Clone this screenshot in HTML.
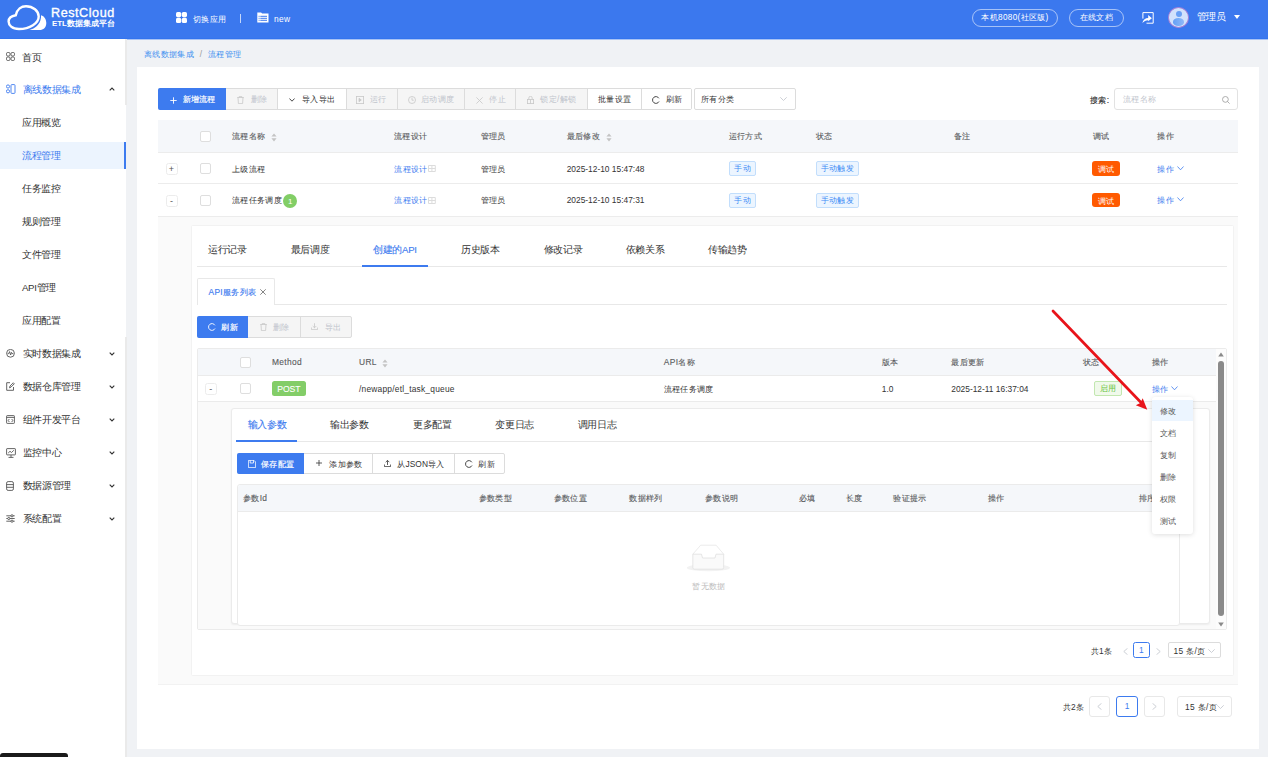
<!DOCTYPE html>
<html><head><meta charset="utf-8">
<style>
*{box-sizing:border-box;margin:0;padding:0}
html,body{width:1268px;height:757px;overflow:hidden;background:#f0f2f5;font-family:"Liberation Sans",sans-serif;color:#333;letter-spacing:.33px}
.ln{letter-spacing:0}
.a{position:absolute}
.t{position:absolute;white-space:nowrap;line-height:14px;height:14px}
.s12{font-size:8.4px}
.s14{font-size:9.6px;letter-spacing:-.3px}
#hdr{left:0;top:0;width:1268px;height:39px;background:#3b78ee;border-bottom:1px solid #3374ee;box-shadow:0 1px 0 #a9c3f5}
#side{left:0;top:39px;width:125px;height:718px;background:#fff}
.btn{position:absolute;height:21px;border:1px solid #dcdcdc;background:#fff;font-size:8.4px;color:#333;line-height:19px;text-align:center;white-space:nowrap}
.btn.p{background:#3d7bef;border-color:#3d7bef;color:#fff}
.btn.d{background:#f5f5f5;color:#c0c4cc;border-color:#e8e8e8}
.hline{position:absolute;height:1px;background:#ececec}
.cb{position:absolute;width:11px;height:11px;border:1px solid #dedede;border-radius:2px;background:#fff}
.exp{position:absolute;width:12px;height:12px;border:1px solid #ececec;border-radius:2.5px;background:#fff;font-size:9px;line-height:10.5px;text-align:center;color:#555}
.tag{position:absolute;height:15px;border:1px solid #c2defc;background:#ecf5ff;color:#3f8cf5;font-size:7.8px;line-height:14px;text-align:center;border-radius:2px;white-space:nowrap}
.th{position:absolute;font-size:8.4px;color:#5a5c60;-webkit-text-stroke:.12px #5a5c60;line-height:14px;height:14px;white-space:nowrap}
.td{position:absolute;font-size:8.4px;color:#333;line-height:14px;height:14px;white-space:nowrap}
.lnk{color:#3d7bef}
.mi{position:absolute;left:22px;font-size:9.6px;letter-spacing:-.3px;color:#333;line-height:14px;height:14px;white-space:nowrap}
</style></head><body>
<!-- HEADER -->
<div id="hdr" class="a">
  <svg class="a" style="left:0;top:0" width="50" height="36" viewBox="0 0 50 36">
    <path d="M15.8,15.2 C17,9 21.5,6.2 26,6.2 C33,6.2 38.7,11 38.7,16.5 C38.7,23 30,29 19,29 C12,29 8.6,25 8.6,21.5 C8.6,18 11.5,15.8 15.8,15.2 Z" fill="none" stroke="#fff" stroke-width="2.4"/>
    <path d="M29.5,30 C35,28.5 40,25 41,17.5 L41,15.2 C44.5,16 46.3,19.5 46.3,23 C46.3,27.5 43.5,30 39.5,30 Z" fill="#fff"/>
  </svg>
  <div class="t" style="left:51px;top:4.5px;font-size:12.6px;color:#fff;height:16px;line-height:16px;-webkit-text-stroke:0.35px #fff;letter-spacing:0.55px">RestCloud</div>
  <div class="t" style="left:52px;top:18.2px;font-size:7.9px;font-weight:bold;color:#fff;height:11px;line-height:11px;letter-spacing:-0.05px">ETL数据集成平台</div>
  <svg class="a" style="left:176px;top:12px" width="11" height="11" viewBox="0 0 11 11"><rect x="0" y="0" width="5.2" height="5.2" rx="1.6" fill="#fff"/><rect x="5.8" y="0" width="5.2" height="5.2" rx="1.6" fill="#fff"/><rect x="0" y="5.8" width="5.2" height="5.2" rx="1.6" fill="#fff"/><rect x="5.8" y="5.8" width="5.2" height="5.2" rx="1.6" fill="#fff"/></svg>
  <div class="t s12" style="left:193px;top:11.5px;color:#fff">切换应用</div>
  <div class="a" style="left:240px;top:14px;width:1px;height:9px;background:rgba(255,255,255,.7)"></div>
  <svg class="a" style="left:257px;top:12px" width="12" height="11" viewBox="0 0 12 11"><path d="M0.3 0.6 h3.8 l1 1 h6.4 v9 h-11.2z" fill="#fff"/><g fill="#3b78ee"><rect x="1.6" y="3.8" width="1" height="1"/><rect x="3.3" y="3.8" width="6.7" height="1"/><rect x="1.6" y="5.8" width="1" height="1"/><rect x="3.3" y="5.8" width="6.7" height="1"/><rect x="1.6" y="7.8" width="1" height="1"/><rect x="3.3" y="7.8" width="6.7" height="1"/></g></svg>
  <div class="t s12" style="left:274px;top:11.6px;color:#fff">new</div>
  <div class="a" style="left:972px;top:9px;width:86px;height:18px;border:1px solid rgba(255,255,255,.55);border-radius:9px;color:#fff;font-size:8.2px;line-height:16px;text-align:center">本机8080(社区版)</div>
  <div class="a" style="left:1069px;top:9px;width:55px;height:18px;border:1px solid rgba(255,255,255,.55);border-radius:9px;color:#fff;font-size:8.2px;line-height:16px;text-align:center">在线文档</div>
  <svg class="a" style="left:1141.5px;top:11.5px" width="12" height="12" viewBox="0 0 12 12"><path d="M0.9 6.6 V0.6 H11.2 V11.2 H4.5" fill="none" stroke="#fff" stroke-width="1"/><path d="M0.3 11 C1.2 7.6 3.5 6.2 6.2 6.1 V3.1 L9.9 6.2 L6.2 9.3 V8.2 C3.8 8.2 2 9.3 0.3 11 Z" fill="#fff"/></svg>
  <div class="a" style="left:1167.7px;top:7.1px;width:21.3px;height:21px;border-radius:50%;background:#d3e2fc;border:1px solid #a27fd6;overflow:hidden">
    <div class="a" style="left:7px;top:3.4px;width:6px;height:6px;border-radius:50%;background:#6aa0f5"></div>
    <div class="a" style="left:4.6px;top:10.3px;width:11px;height:7.5px;border-radius:50%;background:linear-gradient(90deg,#64a0f6,#8fb8f8)"></div>
  </div>
  <div class="t" style="left:1197px;top:10px;font-size:9.5px;color:#fff;letter-spacing:-.6px">管理员</div>
  <div class="a" style="left:1234px;top:15px;width:0;height:0;border-left:3.2px solid transparent;border-right:3.2px solid transparent;border-top:4px solid #fff"></div>
</div>

<!-- SIDEBAR -->
<div class="a" style="left:125px;top:39px;width:2px;height:66.4px;background:#eaeaea"></div>
<div class="a" style="left:125px;top:105.4px;width:1px;height:231.4px;background:#fff"></div>
<div class="a" style="left:125px;top:336.8px;width:2px;height:421px;background:#eaeaea"></div>
<div id="side" class="a">
  <!-- items: centers 57,89.6,122.9,155.4 ... spacing 33 (relative top = cy-39-7) -->
  <svg class="a" style="left:5.5px;top:12.5px" width="9" height="9" viewBox="0 0 9 9" fill="none" stroke="#555" stroke-width="0.9"><rect x="0.5" y="0.5" width="3.5" height="3.5" rx="1.2"/><rect x="5" y="0.5" width="3.5" height="3.5" rx="1.2"/><rect x="0.5" y="5" width="3.5" height="3.5" rx="1.2"/><rect x="5" y="5" width="3.5" height="3.5" rx="1.2"/></svg>
  <div class="mi" style="top:11.5px">首页</div>
  <svg class="a" style="left:5.5px;top:45px" width="10" height="10" viewBox="0 0 10 10" fill="none" stroke="#3d7bef" stroke-width="0.9"><circle cx="2" cy="2.5" r="1.6"/><circle cx="2" cy="7.3" r="1.6"/><rect x="5" y="0.6" width="4" height="8.8" rx="0.8"/></svg>
  <div class="mi" style="top:44.1px;left:22.5px;color:#3d7bef">离线数据集成</div>
  <svg class="a" style="left:108.5px;top:47.5px" width="6" height="4" viewBox="0 0 6 4"><path d="M0.7 3.4 L3 1 L5.3 3.4" fill="none" stroke="#333" stroke-width="1.1"/></svg>
  <div class="mi" style="top:77.4px">应用概览</div>
  <div class="a" style="left:0;top:102.6px;width:126px;height:27px;background:#ecf4fe"></div>
  <div class="a" style="left:123.8px;top:102.6px;width:2.3px;height:27px;background:#3d7bef"></div>
  <div class="mi" style="top:109.9px;color:#3d7bef">流程管理</div>
  <div class="mi" style="top:142.9px">任务监控</div>
  <div class="mi" style="top:175.9px">规则管理</div>
  <div class="mi" style="top:208.9px">文件管理</div>
  <div class="mi" style="top:241.9px">API管理</div>
  <div class="mi" style="top:274.9px">应用配置</div>
  <!-- top-level collapsed -->
  <svg class="a" style="left:5.5px;top:309.5px" width="9" height="9" viewBox="0 0 9 9" fill="none" stroke="#555" stroke-width="0.9"><circle cx="4.5" cy="4.3" r="3.9"/><path d="M1.6 4.6 H2.8 L3.6 2.6 L4.6 6 L5.5 3.4 L6.1 4.6 H7.4"/></svg>
  <div class="mi" style="top:307.9px;left:22.5px">实时数据集成</div>
  <svg class="a" style="left:108.5px;top:312.5px" width="6" height="4" viewBox="0 0 6 4"><path d="M0.7 0.6 L3 3 L5.3 0.6" fill="none" stroke="#333" stroke-width="1.1"/></svg>
  <svg class="a" style="left:5.5px;top:342.5px" width="9" height="9" viewBox="0 0 9 9" fill="none" stroke="#555" stroke-width="0.9"><path d="M7.5 5 V8.3 H0.7 V0.7 H4"/><path d="M3.5 5.8 L4 4 L7.3 0.8 L8.3 1.8 L5 5.1 Z"/></svg>
  <div class="mi" style="top:340.9px;left:22.5px">数据仓库管理</div>
  <svg class="a" style="left:108.5px;top:345.5px" width="6" height="4" viewBox="0 0 6 4"><path d="M0.7 0.6 L3 3 L5.3 0.6" fill="none" stroke="#333" stroke-width="1.1"/></svg>
  <svg class="a" style="left:5.5px;top:375.5px" width="9" height="9" viewBox="0 0 9 9" fill="none" stroke="#555" stroke-width="0.9"><rect x="0.6" y="0.6" width="7.8" height="7.8" rx="0.6"/><path d="M0.6 2.4 H8.4"/><path d="M3.3 4 L2.2 5.5 L3.3 7 M5.7 4 L6.8 5.5 L5.7 7"/></svg>
  <div class="mi" style="top:373.9px;left:22.5px">组件开发平台</div>
  <svg class="a" style="left:108.5px;top:378.5px" width="6" height="4" viewBox="0 0 6 4"><path d="M0.7 0.6 L3 3 L5.3 0.6" fill="none" stroke="#333" stroke-width="1.1"/></svg>
  <svg class="a" style="left:5.5px;top:408.5px" width="10" height="10" viewBox="0 0 10 10" fill="none" stroke="#555" stroke-width="0.9"><rect x="0.6" y="0.6" width="8.8" height="6.3" rx="0.5"/><path d="M5 7 V9.4 M2.5 9.4 H7.5 M2.2 5 L4 3.3 L5.5 4.5 L7.8 2.3"/></svg>
  <div class="mi" style="top:406.9px;left:22.5px">监控中心</div>
  <svg class="a" style="left:108.5px;top:411.5px" width="6" height="4" viewBox="0 0 6 4"><path d="M0.7 0.6 L3 3 L5.3 0.6" fill="none" stroke="#333" stroke-width="1.1"/></svg>
  <svg class="a" style="left:6px;top:441.5px" width="8" height="10" viewBox="0 0 8 10" fill="none" stroke="#555" stroke-width="0.9"><rect x="0.6" y="0.6" width="6.8" height="8.8" rx="1.5"/><path d="M0.6 3.6 H7.4 M0.6 6.3 H7.4"/></svg>
  <div class="mi" style="top:439.9px;left:22.5px">数据源管理</div>
  <svg class="a" style="left:108.5px;top:444.5px" width="6" height="4" viewBox="0 0 6 4"><path d="M0.7 0.6 L3 3 L5.3 0.6" fill="none" stroke="#333" stroke-width="1.1"/></svg>
  <svg class="a" style="left:5.5px;top:474.5px" width="9" height="9" viewBox="0 0 9 9" fill="none" stroke="#555" stroke-width="0.9"><path d="M0.3 1.8 H8.7 M0.3 4.5 H8.7 M0.3 7.2 H8.7"/><circle cx="6" cy="1.8" r="1.1" fill="#fff"/><circle cx="2.8" cy="4.5" r="1.1" fill="#fff"/><circle cx="6" cy="7.2" r="1.1" fill="#fff"/></svg>
  <div class="mi" style="top:472.9px;left:22.5px">系统配置</div>
  <svg class="a" style="left:108.5px;top:477.5px" width="6" height="4" viewBox="0 0 6 4"><path d="M0.7 0.6 L3 3 L5.3 0.6" fill="none" stroke="#333" stroke-width="1.1"/></svg>
</div>

<!-- BREADCRUMB -->
<div class="t" style="left:144px;top:47px;font-size:8.3px;color:#3d8ff0">离线数据集成 <span style="color:#999;margin:0 3px">/</span> 流程管理</div>

<!-- MAIN CARD -->
<div class="a" style="left:137px;top:67px;width:1122px;height:682px;background:#fff"></div>
<!-- TOOLBAR -->
<div class="a" style="left:157.8px;top:88.4px;width:534.5px;height:21.2px;border:1px solid #dcdcdc;border-radius:2px;background:#fff"></div>
<div class="a" style="left:157.8px;top:88.4px;width:68px;height:21.2px;background:#3d7bef;border-radius:2px 0 0 2px"></div>
<svg class="a" style="left:169.5px;top:96.8px" width="7" height="7" viewBox="0 0 7 7"><path d="M3.5 0.3 V6.7 M0.3 3.5 H6.7" stroke="#fff" stroke-width="0.9"/></svg>
<div class="t s12" style="left:182.5px;top:92px;color:#fff;-webkit-text-stroke:.18px #fff">新增流程</div>
<div class="a" style="left:226px;top:89.4px;width:51.5px;height:19.2px;background:#f5f5f5"></div>
<svg class="a" style="left:237px;top:95.5px" width="7" height="8" viewBox="0 0 7 8" fill="none" stroke="#c8c8c8" stroke-width="0.8"><path d="M0.2 1.5 H6.8 M2.3 1.5 V0.4 H4.7 V1.5 M1 1.5 L1.4 7.6 H5.6 L6 1.5"/></svg>
<div class="t s12" style="left:250.5px;top:92px;color:#c0c4cc">删除</div>
<div class="a" style="left:277.3px;top:89.4px;width:1px;height:19.2px;background:#dcdcdc"></div>
<svg class="a" style="left:289.3px;top:97.5px" width="6" height="4" viewBox="0 0 6 4"><path d="M0.4 0.5 L3 3.2 L5.6 0.5" fill="none" stroke="#333" stroke-width="0.9"/></svg>
<div class="t s12" style="left:302px;top:92px;color:#333">导入导出</div>
<div class="a" style="left:345.5px;top:89.4px;width:1px;height:19.2px;background:#dcdcdc"></div>
<div class="a" style="left:346.5px;top:89.4px;width:322px;height:19.2px;background:#f5f5f5"></div>
<div class="a" style="left:396.5px;top:89.4px;width:1px;height:19.2px;background:#dcdcdc"></div>
<div class="a" style="left:464.3px;top:89.4px;width:1px;height:19.2px;background:#dcdcdc"></div>
<div class="a" style="left:515.3px;top:89.4px;width:1px;height:19.2px;background:#dcdcdc"></div>
<div class="a" style="left:587.3px;top:89.4px;width:1px;height:19.2px;background:#dcdcdc"></div>
<div class="a" style="left:588.3px;top:89.4px;width:103px;height:19.2px;background:#fff"></div>
<div class="a" style="left:641px;top:89.4px;width:1px;height:19.2px;background:#dcdcdc"></div>
<svg class="a" style="left:355.8px;top:96px" width="8" height="8" viewBox="0 0 8 8" fill="none" stroke="#c8c8c8" stroke-width="0.8"><rect x="0.4" y="0.4" width="7.2" height="7.2"/><path d="M3 2.3 L5.3 4 L3 5.7Z" fill="#c8c8c8"/></svg>
<div class="t s12" style="left:369.7px;top:92px;color:#c0c4cc">运行</div>
<svg class="a" style="left:407.7px;top:96px" width="8" height="8" viewBox="0 0 8 8" fill="none" stroke="#c8c8c8" stroke-width="0.8"><circle cx="4" cy="4" r="3.5"/><path d="M4 1.8 V4.2 H5.8"/></svg>
<div class="t s12" style="left:421px;top:92px;color:#c0c4cc">启动调度</div>
<svg class="a" style="left:476.4px;top:96.5px" width="7" height="7" viewBox="0 0 7 7"><path d="M0.4 0.4 L6.6 6.6 M6.6 0.4 L0.4 6.6" stroke="#c8c8c8" stroke-width="0.8"/></svg>
<div class="t s12" style="left:489.2px;top:92px;color:#c0c4cc">停止</div>
<svg class="a" style="left:526.7px;top:95.5px" width="7" height="8" viewBox="0 0 7 8" fill="none" stroke="#c8c8c8" stroke-width="0.8"><path d="M1.8 3.5 V2 A1.7 1.7 0 0 1 5.2 2 V3.5"/><rect x="0.4" y="3.5" width="6.2" height="4.1"/><path d="M3.5 3.5 V7.6"/></svg>
<div class="t s12" style="left:540.4px;top:92px;color:#c0c4cc">锁定/解锁</div>
<div class="t s12" style="left:598px;top:92px;color:#333">批量设置</div>
<svg class="a" style="left:651.8px;top:95.8px" width="8" height="8" viewBox="0 0 8 8" fill="none" stroke="#333" stroke-width="0.9"><path d="M6.9 2.3 A3.4 3.4 0 1 0 7 5.5"/></svg>
<div class="t s12" style="left:666px;top:92px;color:#333">刷新</div>
<div class="a" style="left:694.1px;top:88.4px;width:101.8px;height:21.2px;border:1px solid #dcdcdc;border-radius:2px;background:#fff"></div>
<div class="t s12" style="left:701px;top:92px;color:#333">所有分类</div>
<svg class="a" style="left:780px;top:97px" width="7" height="4" viewBox="0 0 7 4"><path d="M0.3 0.3 L3.5 3.5 L6.7 0.3" fill="none" stroke="#c0c4cc" stroke-width="0.8"/></svg>
<div class="t s12" style="left:1090px;top:92.5px;color:#333;-webkit-text-stroke:.15px #333">搜索:</div>
<div class="a" style="left:1114px;top:88px;width:123.8px;height:21.5px;border:1px solid #e2e2e2;border-radius:3px;background:#fff"></div>
<div class="t s12" style="left:1123px;top:92px;color:#c0c4cc">流程名称</div>
<svg class="a" style="left:1222px;top:95.5px" width="8" height="8" viewBox="0 0 8 8" fill="none" stroke="#999" stroke-width="0.8"><circle cx="3.4" cy="3.4" r="2.9"/><path d="M5.5 5.5 L7.6 7.6"/></svg>

<!-- MAIN TABLE -->
<div class="a" style="left:158px;top:120px;width:1080px;height:32.6px;background:#f5f7fa;border-bottom:1px solid #ececec"></div>
<div class="cb" style="left:200px;top:131px"></div>
<div class="th" style="left:232px;top:128.7px">流程名称</div>
<svg class="a" style="left:270.5px;top:132.5px" width="6" height="9" viewBox="0 0 6 9"><path d="M3 0.6 L5.6 3.4 H0.4Z M3 8.4 L5.6 5.3 H0.4Z" fill="#c4c4c4"/></svg>
<div class="th" style="left:394px;top:128.7px">流程设计</div>
<div class="th" style="left:480.6px;top:128.7px">管理员</div>
<div class="th" style="left:566.7px;top:128.7px">最后修改</div>
<svg class="a" style="left:605.5px;top:132.5px" width="6" height="9" viewBox="0 0 6 9"><path d="M3 0.6 L5.6 3.4 H0.4Z M3 8.4 L5.6 5.3 H0.4Z" fill="#c4c4c4"/></svg>
<div class="th" style="left:728.7px;top:128.7px">运行方式</div>
<div class="th" style="left:815.5px;top:128.7px">状态</div>
<div class="th" style="left:954px;top:128.7px">备注</div>
<div class="th" style="left:1092.7px;top:128.7px">调试</div>
<div class="th" style="left:1157.3px;top:128.7px">操作</div>

<div class="hline" style="left:158px;top:183px;width:1080px"></div>
<div class="exp" style="left:165.6px;top:162.8px">+</div>
<div class="cb" style="left:200px;top:163px"></div>
<div class="td" style="left:232px;top:161.6px">上级流程</div>
<div class="td lnk" style="left:394.3px;top:161.6px">流程设计<svg width="8" height="7" viewBox="0 0 8 7" style="position:absolute;left:33.5px;top:3.8px"><path d="M0.5 0.5 H7.3 V6.5 H0.5Z M0.5 3.5 H7.3 M3.9 0.5 V6.5" fill="none" stroke="#dcdcdc" stroke-width="1"/></svg></div>
<div class="td" style="left:480.6px;top:161.6px">管理员</div>
<div class="td" style="left:566.7px;top:161.6px;letter-spacing:0">2025-12-10 15:47:48</div>
<div class="tag" style="left:729.3px;top:161px;width:26.5px">手动</div>
<div class="tag" style="left:815.5px;top:161.2px;width:43.5px">手动触发</div>
<div class="a" style="left:1092.4px;top:161.2px;width:27.3px;height:14.8px;background:#ff5a00;border-radius:2.5px;color:#fff;font-size:7.8px;line-height:17.2px;text-align:center;border-radius:3px">调试</div>
<div class="td lnk" style="left:1157.3px;top:161.6px">操作 <svg width="7" height="5" viewBox="0 0 7 5" style="vertical-align:1px"><path d="M0.5 0.5 L3.5 3.8 L6.5 0.5" fill="none" stroke="#3d7bef" stroke-width="0.8"/></svg></div>

<div class="hline" style="left:158px;top:216px;width:1080px"></div>
<div class="exp" style="left:165.6px;top:194.5px">-</div>
<div class="cb" style="left:200px;top:195px"></div>
<div class="td" style="left:232px;top:193.3px">流程任务调度</div>
<div class="a" style="left:283.2px;top:193.7px;width:14px;height:14.3px;border-radius:50%;background:#82ce66;color:#fff;font-size:8px;line-height:15.6px;letter-spacing:0;text-align:center">1</div>
<div class="td lnk" style="left:394.3px;top:193.3px">流程设计<svg width="8" height="7" viewBox="0 0 8 7" style="position:absolute;left:33.5px;top:3.8px"><path d="M0.5 0.5 H7.3 V6.5 H0.5Z M0.5 3.5 H7.3 M3.9 0.5 V6.5" fill="none" stroke="#dcdcdc" stroke-width="1"/></svg></div>
<div class="td" style="left:480.6px;top:193.3px">管理员</div>
<div class="td" style="left:566.7px;top:193.3px;letter-spacing:0">2025-12-10 15:47:31</div>
<div class="tag" style="left:729.3px;top:192.6px;width:26.5px">手动</div>
<div class="tag" style="left:815.5px;top:192.6px;width:43.5px">手动触发</div>
<div class="a" style="left:1092.4px;top:192.6px;width:27.3px;height:14.8px;background:#ff5a00;border-radius:2.5px;color:#fff;font-size:7.8px;line-height:17.2px;text-align:center;border-radius:3px">调试</div>
<div class="td lnk" style="left:1157.3px;top:193.3px">操作 <svg width="7" height="5" viewBox="0 0 7 5" style="vertical-align:1px"><path d="M0.5 0.5 L3.5 3.8 L6.5 0.5" fill="none" stroke="#3d7bef" stroke-width="0.8"/></svg></div>

<!-- EXPANDED AREA -->
<div class="a" style="left:158px;top:217px;width:1080px;height:468.2px;background:#fafafa;border-bottom:1px solid #f2f2f2"></div>
<div class="a" style="left:191.5px;top:225.5px;width:1041px;height:449.5px;background:#fff;box-shadow:0 0 1.5px rgba(0,0,0,.12)"></div>
<!-- INNER TABS -->
<div class="t s14" style="left:208px;top:243px;color:#333">运行记录</div>
<div class="t s14" style="left:290.5px;top:243px;color:#333">最后调度</div>
<div class="t s14" style="left:373px;top:243px;color:#3d7bef;-webkit-text-stroke:.12px #3d7bef">创建的API</div>
<div class="t s14" style="left:461px;top:243px;color:#333">历史版本</div>
<div class="t s14" style="left:543.5px;top:243px;color:#333">修改记录</div>
<div class="t s14" style="left:625.5px;top:243px;color:#333">依赖关系</div>
<div class="t s14" style="left:708px;top:243px;color:#333">传输趋势</div>
<div class="a" style="left:197px;top:266px;width:1029.6px;height:1px;background:#e8e8e8"></div>
<div class="a" style="left:361.8px;top:264.8px;width:66px;height:2px;background:#3d7bef"></div>
<!-- card tab -->
<div class="a" style="left:197px;top:304px;width:1029.7px;height:1px;background:#e8e8e8"></div>
<div class="a" style="left:197.2px;top:278.3px;width:78.3px;height:26.7px;border:1px solid #e8e8e8;border-bottom:none;border-radius:2px 2px 0 0;background:#fff"></div>
<div class="t s12" style="left:208.5px;top:284.6px;color:#3d7bef;-webkit-text-stroke:.15px #3d7bef">API服务列表</div>
<svg class="a" style="left:259.5px;top:288.5px" width="6" height="6" viewBox="0 0 6 6"><path d="M0.3 0.3 L5.7 5.7 M5.7 0.3 L0.3 5.7" stroke="#666" stroke-width="0.8"/></svg>
<!-- api buttons -->
<div class="a" style="left:197px;top:316.2px;width:154.5px;height:21.5px;border:1px solid #dcdcdc;border-radius:2px;background:#f5f5f5"></div>
<div class="a" style="left:197px;top:316.2px;width:51.4px;height:21.5px;background:#3d7bef;border-radius:2px 0 0 2px"></div>
<div class="a" style="left:299.5px;top:317.2px;width:1px;height:19.5px;background:#dcdcdc"></div>
<svg class="a" style="left:207.8px;top:323px" width="8" height="8" viewBox="0 0 8 8" fill="none" stroke="#fff" stroke-width="0.9"><path d="M6.9 2.3 A3.4 3.4 0 1 0 7 5.5"/></svg>
<div class="t s12" style="left:221.4px;top:320px;color:#fff;-webkit-text-stroke:.18px #fff">刷新</div>
<svg class="a" style="left:260px;top:323px" width="7" height="8" viewBox="0 0 7 8" fill="none" stroke="#c8c8c8" stroke-width="0.8"><path d="M0.2 1.5 H6.8 M2.3 1.5 V0.4 H4.7 V1.5 M1 1.5 L1.4 7.6 H5.6 L6 1.5"/></svg>
<div class="t s12" style="left:273px;top:320px;color:#c0c4cc">删除</div>
<svg class="a" style="left:310.8px;top:323px" width="7" height="7" viewBox="0 0 7 7" fill="none" stroke="#c8c8c8" stroke-width="0.8"><path d="M3.5 0.2 V4.8 M1.7 3 L3.5 4.8 L5.3 3 M0.4 4.5 V6.6 H6.6 V4.5"/></svg>
<div class="t s12" style="left:324.5px;top:320px;color:#c0c4cc">导出</div>

<!-- API TABLE -->
<div class="a" style="left:197.3px;top:348.3px;width:1029.5px;height:282px;border:1px solid #ebebeb;border-radius:2px;background:#fff"></div>
<div class="a" style="left:198.3px;top:349.3px;width:1017.6px;height:26.6px;background:#f5f7fa;border-bottom:1px solid #ebebeb"></div>
<div class="cb" style="left:240.4px;top:357px"></div>
<div class="th" style="left:272px;top:355.2px">Method</div>
<div class="th" style="left:359px;top:355.2px">URL</div>
<svg class="a" style="left:381.5px;top:358.5px" width="6" height="9" viewBox="0 0 6 9"><path d="M3 0.6 L5.6 3.4 H0.4Z M3 8.4 L5.6 5.3 H0.4Z" fill="#c4c4c4"/></svg>
<div class="th" style="left:663.8px;top:355.2px">API名称</div>
<div class="th" style="left:881.8px;top:355.2px">版本</div>
<div class="th" style="left:951.3px;top:355.2px">最后更新</div>
<div class="th" style="left:1082.6px;top:355.2px">状态</div>
<div class="th" style="left:1151.7px;top:355.2px">操作</div>
<div class="exp" style="left:205px;top:383.2px;width:12px;height:11.5px">-</div>
<div class="cb" style="left:240.4px;top:383.2px"></div>
<div class="a" style="left:272px;top:381px;width:33.8px;height:15px;background:#83cd68;border-radius:2.5px;color:#fff;font-size:8.6px;line-height:16px;letter-spacing:0;text-align:center;-webkit-text-stroke:.1px #fff">POST</div>
<div class="td" style="left:359px;top:381.8px;letter-spacing:.22px">/newapp/etl_task_queue</div>
<div class="td" style="left:663.8px;top:381.8px">流程任务调度</div>
<div class="td" style="left:881.8px;top:381.8px;letter-spacing:0">1.0</div>
<div class="td" style="left:951.3px;top:381.8px;letter-spacing:0">2025-12-11 16:37:04</div>
<div class="tag" style="left:1094.2px;top:381.2px;width:27.5px;background:#f0f9eb;border-color:#c2e7b0;color:#67c23a">启用</div>
<div class="td lnk" style="left:1151.7px;top:381.8px">操作 <svg width="7" height="5" viewBox="0 0 7 5" style="vertical-align:1px"><path d="M0.5 0.5 L3.5 3.8 L6.5 0.5" fill="none" stroke="#3d7bef" stroke-width="0.8"/></svg></div>
<div class="a" style="left:198.3px;top:401px;width:1017.6px;height:228.3px;background:#fafafa;border-top:1px solid #ebebeb"></div>
<!-- scrollbar -->
<div class="a" style="left:1215.9px;top:349.3px;width:10px;height:280px;background:#fcfcfc"></div>
<div class="a" style="left:1217.9px;top:361px;width:5.7px;height:254.8px;border-radius:3px;background:#8a8a8a"></div>
<svg class="a" style="left:1218px;top:352px" width="6" height="5" viewBox="0 0 6 5"><path d="M3 0.5 L5.8 4.5 H0.2Z" fill="#8a8a8a"/></svg>
<svg class="a" style="left:1218px;top:622px" width="6" height="5" viewBox="0 0 6 5"><path d="M3 4.5 L5.8 0.5 H0.2Z" fill="#8a8a8a"/></svg>

<!-- PARAMS CARD -->
<div class="a" style="left:230.5px;top:407.6px;width:979.8px;height:216.2px;border:1px solid #ebebeb;border-radius:3px;background:#fff;box-shadow:0 1px 2px rgba(0,0,0,.06)"></div>
<div class="t s14" style="left:247.6px;top:417.8px;color:#3d7bef;-webkit-text-stroke:.12px #3d7bef">输入参数</div>
<div class="t s14" style="left:330px;top:417.8px;color:#333">输出参数</div>
<div class="t s14" style="left:413px;top:417.8px;color:#333">更多配置</div>
<div class="t s14" style="left:495.2px;top:417.8px;color:#333">变更日志</div>
<div class="t s14" style="left:577.7px;top:417.8px;color:#333">调用日志</div>
<div class="a" style="left:236px;top:440.5px;width:944px;height:1px;background:#e8e8e8"></div>
<div class="a" style="left:236px;top:439.6px;width:61px;height:2px;background:#3d7bef"></div>
<!-- params buttons -->
<div class="a" style="left:236.5px;top:452.5px;width:268.3px;height:21.7px;border:1px solid #dcdcdc;border-radius:2px;background:#fff"></div>
<div class="a" style="left:236.5px;top:452.5px;width:67.5px;height:21.7px;background:#3d7bef;border-radius:2px 0 0 2px"></div>
<div class="a" style="left:372.4px;top:453.5px;width:1px;height:19.7px;background:#dcdcdc"></div>
<div class="a" style="left:453.7px;top:453.5px;width:1px;height:19.7px;background:#dcdcdc"></div>
<svg class="a" style="left:247.6px;top:459.5px" width="8" height="8" viewBox="0 0 8 8" fill="none" stroke="#fff" stroke-width="0.8"><path d="M0.4 0.4 H6 L7.6 2 V7.6 H0.4Z M2.2 0.4 V3 H5.5 V0.4"/></svg>
<div class="t s12" style="left:261px;top:456.5px;color:#fff;-webkit-text-stroke:.18px #fff">保存配置</div>
<svg class="a" style="left:316.2px;top:460.3px" width="6" height="6" viewBox="0 0 6 6"><path d="M3 0 V6 M0 3 H6" stroke="#333" stroke-width="0.8"/></svg>
<div class="t s12" style="left:329.3px;top:456.5px;color:#333">添加参数</div>
<svg class="a" style="left:384.2px;top:459.5px" width="7" height="7" viewBox="0 0 7 7" fill="none" stroke="#333" stroke-width="0.8"><path d="M3.5 5 V0.4 M1.7 2.2 L3.5 0.4 L5.3 2.2 M0.4 4.5 V6.6 H6.6 V4.5"/></svg>
<div class="t s12" style="left:397.3px;top:456.5px;color:#333;letter-spacing:.1px">从JSON导入</div>
<svg class="a" style="left:464.5px;top:459.5px" width="8" height="8" viewBox="0 0 8 8" fill="none" stroke="#333" stroke-width="0.9"><path d="M6.9 2.3 A3.4 3.4 0 1 0 7 5.5"/></svg>
<div class="t s12" style="left:478.3px;top:456.5px;color:#333">刷新</div>
<!-- params table -->
<div class="a" style="left:236.5px;top:484px;width:943.5px;height:142px;border:1px solid #ebebeb;border-radius:3px;background:#fff"></div>
<div class="a" style="left:237.5px;top:485px;width:941.5px;height:26.7px;background:#f5f7fa;border-bottom:1px solid #ebebeb;border-radius:3px 3px 0 0"></div>
<div class="th" style="left:243px;top:491.3px">参数Id</div>
<div class="th" style="left:478.6px;top:491.3px">参数类型</div>
<div class="th" style="left:553.8px;top:491.3px">参数位置</div>
<div class="th" style="left:629.3px;top:491.3px">数据样列</div>
<div class="th" style="left:705px;top:491.3px">参数说明</div>
<div class="th" style="left:798.7px;top:491.3px">必填</div>
<div class="th" style="left:846px;top:491.3px">长度</div>
<div class="th" style="left:893.4px;top:491.3px">验证提示</div>
<div class="th" style="left:987.6px;top:491.3px">操作</div>
<div class="th" style="left:1138.5px;top:491.3px">排序</div>
<!-- empty -->
<svg class="a" style="left:685px;top:543px" width="48" height="32" viewBox="0 0 48 32">
  <ellipse cx="23.4" cy="24.7" rx="21.6" ry="3.6" fill="#f2f2f2"/>
  <path d="M7.8 11.2 L15.7 2.2 H31.1 L38.7 11.2" fill="none" stroke="#e6e6e6" stroke-width="0.8"/>
  <path d="M7.8 11.2 H16.5 L17.5 15 H30 L31 11.2 H38.7 V24.5 Q38.7 26.2 37 26.2 H9.5 Q7.8 26.2 7.8 24.5Z" fill="#fafafa" stroke="#e0e0e0" stroke-width="0.8"/>
</svg>
<div class="t s12" style="left:692.4px;top:579px;color:#bbb">暂无数据</div>

<!-- INNER PAGINATION -->
<div class="t s12" style="left:1090.6px;top:643.8px;color:#333">共1条</div>
<svg class="a" style="left:1122.6px;top:647.5px" width="5" height="7" viewBox="0 0 5 7"><path d="M4.5 0.3 L0.8 3.5 L4.5 6.7" fill="none" stroke="#c0c4cc" stroke-width="0.8"/></svg>
<div class="a" style="left:1133.2px;top:642.2px;width:16.6px;height:16.3px;border:1px solid #3d7bef;border-radius:2.5px;color:#3d7bef;font-size:8.4px;line-height:14.3px;text-align:center">1</div>
<svg class="a" style="left:1155.7px;top:647.5px" width="5" height="7" viewBox="0 0 5 7"><path d="M0.5 0.3 L4.2 3.5 L0.5 6.7" fill="none" stroke="#c0c4cc" stroke-width="0.8"/></svg>
<div class="a" style="left:1167.8px;top:642.2px;width:53px;height:16.3px;border:1px solid #dcdcdc;border-radius:2px;background:#fff"></div>
<div class="t s12" style="left:1173.5px;top:643.8px;color:#333">15 条/页</div>
<svg class="a" style="left:1207.5px;top:649px" width="7" height="4" viewBox="0 0 7 4"><path d="M0.3 0.3 L3.5 3.5 L6.7 0.3" fill="none" stroke="#c0c4cc" stroke-width="0.8"/></svg>

<!-- OUTER PAGINATION -->
<div class="t s12" style="left:1062.6px;top:699.8px;color:#333">共2条</div>
<div class="a" style="left:1088.6px;top:695.8px;width:21.8px;height:21.5px;border:1px solid #e8e8e8;border-radius:3px;background:#fff"></div>
<svg class="a" style="left:1097px;top:703px" width="5" height="7" viewBox="0 0 5 7"><path d="M4.5 0.3 L0.8 3.5 L4.5 6.7" fill="none" stroke="#c0c4cc" stroke-width="0.8"/></svg>
<div class="a" style="left:1116.3px;top:695.8px;width:21.9px;height:21.5px;border:1px solid #3d7bef;border-radius:3px;color:#3d7bef;font-size:8.4px;line-height:19.5px;text-align:center">1</div>
<div class="a" style="left:1144px;top:695.8px;width:21.2px;height:21.5px;border:1px solid #e8e8e8;border-radius:3px;background:#fff"></div>
<svg class="a" style="left:1152.3px;top:703px" width="5" height="7" viewBox="0 0 5 7"><path d="M0.5 0.3 L4.2 3.5 L0.5 6.7" fill="none" stroke="#c0c4cc" stroke-width="0.8"/></svg>
<div class="a" style="left:1177.3px;top:695.8px;width:55px;height:21.5px;border:1px solid #e8e8e8;border-radius:3px;background:#fff"></div>
<div class="t s12" style="left:1185px;top:699.8px;color:#333">15 条/页</div>
<svg class="a" style="left:1217px;top:704.5px" width="7" height="4" viewBox="0 0 7 4"><path d="M0.3 0.3 L3.5 3.5 L6.7 0.3" fill="none" stroke="#c0c4cc" stroke-width="0.8"/></svg>

<!-- DROPDOWN -->
<div class="a" style="left:1151.6px;top:396.9px;width:41.1px;height:137.2px;background:#fff;border-radius:3px;box-shadow:0 1px 5px rgba(0,0,0,.13)"></div>
<div class="a" style="left:1151.6px;top:400px;width:41.1px;height:21px;background:#ecf5ff"></div>
<div class="t s12" style="left:1160px;top:403.6px;color:#555">修改</div>
<div class="t s12" style="left:1160px;top:425.8px;color:#555">文档</div>
<div class="t s12" style="left:1160px;top:448.2px;color:#555">复制</div>
<div class="t s12" style="left:1160px;top:469.5px;color:#555">删除</div>
<div class="t s12" style="left:1160px;top:491.6px;color:#555">权限</div>
<div class="t s12" style="left:1160px;top:513.8px;color:#555">测试</div>

<!-- RED ARROW -->
<svg class="a" style="left:1040px;top:300px" width="120" height="120" viewBox="0 0 120 120">
  <path d="M13 11 L101 102.5" stroke="#e8141a" stroke-width="2.7" stroke-linecap="round"/>
  <path d="M107.3 109.8 L95.8 105.2 L100.3 103 L102.7 98.2 Z" fill="#e8141a"/>
</svg>

<!-- black bar -->
<div class="a" style="left:0;top:753px;width:67.5px;height:8px;background:#1a1a1a;border-radius:3px"></div>



</body></html>
